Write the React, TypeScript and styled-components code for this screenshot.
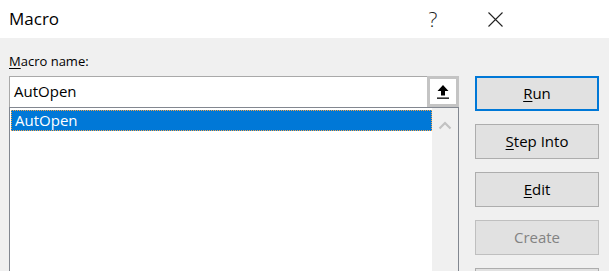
import React from "react";
import styled, { createGlobalStyle } from "styled-components";

const GlobalStyle = createGlobalStyle`
  html, body {
    margin: 0;
    padding: 0;
    width: 609px;
    height: 271px;
    overflow: hidden;
    background: #f0f0f0;
  }
  * { box-sizing: border-box; }
`;

const Dialog = styled.div`
  width: 609px;
  height: 271px;
  overflow: hidden;
  background: #f0f0f0;
  font-family: "Open Sans", "Noto Sans", sans-serif;
  color: #000;
`;

const TitleBar = styled.div`
  display: flex;
  align-items: center;
  height: 38px;
  padding-left: 9px;
  padding-right: 83px;
  background: #fff;
`;

const Title = styled.div`
  flex: 1;
  font-size: 17px;
  padding-bottom: 2px;
`;

const TitleButton = styled.div`
  display: flex;
  align-items: center;
  justify-content: center;
  width: 62px;
  height: 38px;
  font-size: 21px;
  font-weight: 300;
  color: #222;
`;

const Body = styled.div`
  display: grid;
  grid-template-columns: 450px 124px;
  column-gap: 16px;
  padding: 13px 0 0 9px;
`;

const LeftCol = styled.div`
  display: flex;
  flex-direction: column;
`;

const Label = styled.div`
  font-size: 13px;
  height: 21px;
  margin-bottom: 4px;
  line-height: 20px;
`;

const Key = styled.span`
  text-decoration: underline;
  text-underline-offset: 2px;
  text-decoration-thickness: 1px;
`;

const InputRow = styled.div`
  display: flex;
  height: 31px;
  border: 1px solid #a9a9a9;
  border-bottom: none;
  background: #fff;
`;

const TextField = styled.div`
  flex: 1;
  padding-left: 4px;
  font-size: 15px;
  line-height: 29px;
`;

const UploadButton = styled.div`
  display: flex;
  align-items: center;
  justify-content: center;
  width: 32px;
  height: 31px;
  margin-top: -1px;
  margin-right: -1px;
  background: #c4c4c4;
  padding: 3px;
`;

const UploadInner = styled.div`
  display: flex;
  align-items: center;
  justify-content: center;
  width: 100%;
  height: 100%;
  background: #fff;
`;

const ListBox = styled.div`
  display: flex;
  height: 180px;
  border: 1px solid #828790;
  background: #fff;
`;

const Items = styled.div`
  flex: 1;
  padding: 2px 0 0 1px;
`;

const Item = styled.div<{ $selected?: boolean }>`
  height: 21px;
  padding-left: 3px;
  font-size: 15px;
  line-height: 19px;
  color: ${(p) => (p.$selected ? "#fff" : "#000")};
  background: ${(p) => (p.$selected ? "#0078d7" : "transparent")};
  border: 1px dotted ${(p) => (p.$selected ? "#f5a54a" : "transparent")};
`;

const ScrollBar = styled.div`
  display: flex;
  justify-content: center;
  width: 26px;
  padding-top: 13px;
  background: #f0f0f0;
`;

const Buttons = styled.div`
  display: flex;
  flex-direction: column;
  gap: 13px;
  padding-top: 25px;
`;

const Button = styled.div<{ $default?: boolean; $disabled?: boolean }>`
  display: flex;
  align-items: center;
  justify-content: center;
  height: 35px;
  flex-shrink: 0;
  font-size: 15px;
  background: #e1e1e1;
  color: ${(p) => (p.$disabled ? "#838383" : "#000")};
  border: ${(p) =>
    p.$default ? "2px solid #0078d7" : `1px solid ${p.$disabled ? "#bfbfbf" : "#adadad"}`};
  padding-bottom: 1px;
`;

const CloseIcon = () => (
  <svg width="15" height="15" viewBox="0 0 15 15">
    <path d="M0.5 0.5L14.5 14.5M14.5 0.5L0.5 14.5" stroke="#222" strokeWidth="1.1" fill="none" />
  </svg>
);

const UploadIcon = () => (
  <svg width="14" height="16" viewBox="0 0 14 16">
    <path d="M7 1L1.5 7H5V11.5H9V7H12.5Z" fill="#000" />
    <rect x="1" y="13.5" width="12" height="1.3" fill="#000" />
  </svg>
);

const ChevronUp = () => (
  <svg width="14" height="9" viewBox="0 0 14 9">
    <path d="M1.5 7.5L7 2L12.5 7.5" stroke="#c2c2c2" strokeWidth="2.2" fill="none" />
  </svg>
);

export default function App() {
  return (
    <Dialog>
      <GlobalStyle />
      <TitleBar>
        <Title>Macro</Title>
        <TitleButton>?</TitleButton>
        <TitleButton>
          <CloseIcon />
        </TitleButton>
      </TitleBar>
      <Body>
        <LeftCol>
          <Label>
            <Key>M</Key>acro name:
          </Label>
          <InputRow>
            <TextField>AutOpen</TextField>
            <UploadButton>
              <UploadInner>
                <UploadIcon />
              </UploadInner>
            </UploadButton>
          </InputRow>
          <ListBox>
            <Items>
              <Item $selected>AutOpen</Item>
            </Items>
            <ScrollBar>
              <ChevronUp />
            </ScrollBar>
          </ListBox>
        </LeftCol>
        <Buttons>
          <Button $default>
            <span>
              <Key>R</Key>un
            </span>
          </Button>
          <Button>
            <span>
              <Key>S</Key>tep Into
            </span>
          </Button>
          <Button>
            <span>
              <Key>E</Key>dit
            </span>
          </Button>
          <Button $disabled>Create</Button>
          <Button />
        </Buttons>
      </Body>
    </Dialog>
  );
}
